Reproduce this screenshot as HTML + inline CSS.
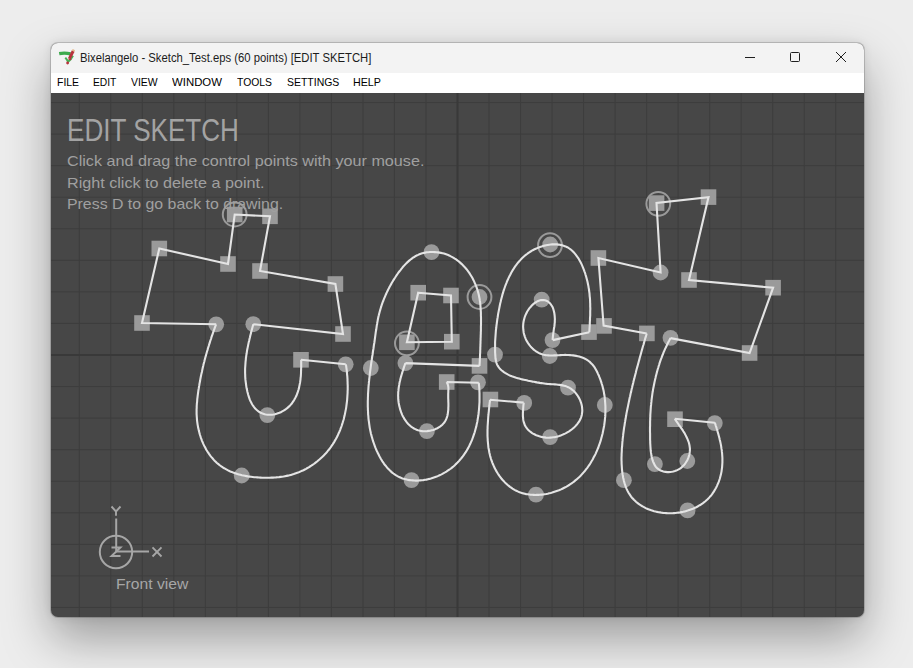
<!DOCTYPE html>
<html><head><meta charset="utf-8">
<style>
html,body{margin:0;padding:0;}
body{width:913px;height:668px;background:#ededed;position:relative;overflow:hidden;font-family:"Liberation Sans",sans-serif;}
.win{position:absolute;left:51px;top:43px;width:813px;height:574px;border-radius:7px;background:#474747;box-shadow:0 22px 48px rgba(0,0,0,0.34),0 0 10px rgba(0,0,0,0.10),0 0 0 1px rgba(0,0,0,0.16);overflow:hidden;}
.title{position:absolute;left:0;top:0;width:813px;height:30px;background:#f3f3f3;}
.menu{position:absolute;left:0;top:30px;width:813px;height:20px;background:#ffffff;}
.t{position:absolute;white-space:pre;transform-origin:0 0;line-height:1;}
svg{position:absolute;left:0;top:0;}
</style></head><body>
<div class="win">
 <div class="title"></div>
 <div class="menu"></div>
</div>
<svg width="913" height="668" viewBox="0 0 913 668">
 <defs><clipPath id="cv"><rect x="51" y="93" width="813" height="524" rx="0"/></clipPath></defs>
 <g clip-path="url(#cv)">
  <g stroke="#3d3d3d" stroke-width="1"><line x1="79.26" y1="93" x2="79.26" y2="617"/><line x1="110.78" y1="93" x2="110.78" y2="617"/><line x1="142.30" y1="93" x2="142.30" y2="617"/><line x1="173.82" y1="93" x2="173.82" y2="617"/><line x1="205.34" y1="93" x2="205.34" y2="617"/><line x1="236.86" y1="93" x2="236.86" y2="617"/><line x1="268.38" y1="93" x2="268.38" y2="617"/><line x1="299.90" y1="93" x2="299.90" y2="617"/><line x1="331.42" y1="93" x2="331.42" y2="617"/><line x1="362.94" y1="93" x2="362.94" y2="617"/><line x1="394.46" y1="93" x2="394.46" y2="617"/><line x1="425.98" y1="93" x2="425.98" y2="617"/><line x1="489.02" y1="93" x2="489.02" y2="617"/><line x1="520.54" y1="93" x2="520.54" y2="617"/><line x1="552.06" y1="93" x2="552.06" y2="617"/><line x1="583.58" y1="93" x2="583.58" y2="617"/><line x1="615.10" y1="93" x2="615.10" y2="617"/><line x1="646.62" y1="93" x2="646.62" y2="617"/><line x1="678.14" y1="93" x2="678.14" y2="617"/><line x1="709.66" y1="93" x2="709.66" y2="617"/><line x1="741.18" y1="93" x2="741.18" y2="617"/><line x1="772.70" y1="93" x2="772.70" y2="617"/><line x1="804.22" y1="93" x2="804.22" y2="617"/><line x1="835.74" y1="93" x2="835.74" y2="617"/><line x1="51" y1="102.52" x2="864" y2="102.52"/><line x1="51" y1="134.08" x2="864" y2="134.08"/><line x1="51" y1="165.64" x2="864" y2="165.64"/><line x1="51" y1="197.20" x2="864" y2="197.20"/><line x1="51" y1="228.76" x2="864" y2="228.76"/><line x1="51" y1="260.32" x2="864" y2="260.32"/><line x1="51" y1="291.88" x2="864" y2="291.88"/><line x1="51" y1="323.44" x2="864" y2="323.44"/><line x1="51" y1="386.56" x2="864" y2="386.56"/><line x1="51" y1="418.12" x2="864" y2="418.12"/><line x1="51" y1="449.68" x2="864" y2="449.68"/><line x1="51" y1="481.24" x2="864" y2="481.24"/><line x1="51" y1="512.80" x2="864" y2="512.80"/><line x1="51" y1="544.36" x2="864" y2="544.36"/><line x1="51" y1="575.92" x2="864" y2="575.92"/><line x1="51" y1="607.48" x2="864" y2="607.48"/></g>
  <g stroke="#393939" stroke-width="2"><line x1="457.5" y1="93" x2="457.5" y2="617"/><line x1="51" y1="355.0" x2="864" y2="355.0"/></g>
 </g>
 <!-- icon -->
 <g>
  <path d="M59.2 53.6 C62.5 53 66.5 52.9 70.6 53.9" stroke="#3daa4d" stroke-width="3.2" fill="none" stroke-linecap="butt"/>
  <path d="M65.3 57.6 C66.5 59 67.5 60.5 68.2 61.8 C69.8 60.5 71.5 58.5 73 55.8" stroke="#47b055" stroke-width="2" fill="none"/>
  <path d="M73.2 51 L69.4 58.6" stroke="#b8323c" stroke-width="3" fill="none"/>
  <path d="M73.9 49.6 L73.1 51.2" stroke="#e6b98a" stroke-width="2.6" fill="none"/>
  <path d="M68.4 58.8 L71.2 59.6" stroke="#b8323c" stroke-width="1.4" fill="none"/>
  <circle cx="67.6" cy="63" r="1.4" fill="#b8323c"/>
 </g>
 <!-- window controls -->
 <g stroke="#1f1f1f" stroke-width="1" fill="none">
  <line x1="745" y1="57.5" x2="755" y2="57.5"/>
  <rect x="790.5" y="52.5" width="9" height="9" rx="1"/>
  <line x1="836" y1="52" x2="846" y2="62"/><line x1="846" y1="52" x2="836" y2="62"/>
 </g>
 <!-- axis indicator -->
 <g stroke="#a6a6a6" stroke-width="2" fill="none">
  <circle cx="116" cy="552" r="16.2"/>
  <line x1="116.2" y1="518.5" x2="116.2" y2="552"/>
  <line x1="116" y1="551.6" x2="149" y2="551.6"/>
 </g>
 <g stroke="#a6a6a6" stroke-width="1.9" fill="none">
  <path d="M111.5 506.5 L116 511.5 L120.5 506.5 M116 511.5 V515.8"/>
  <path d="M152.5 547.3 L161.5 556.5 M161.5 547.3 L152.5 556.5"/>
  <path d="M111.5 547.5 H120.5 L111.5 556 H120.5"/>
 </g>
 <!-- sketch -->
 <g clip-path="url(#cv)">
  <g fill="#9a9a9a"><rect x="134.2" y="315.2" width="15.6" height="15.6"/><rect x="151.5" y="240.7" width="15.6" height="15.6"/><rect x="220.2" y="256.2" width="15.6" height="15.6"/><rect x="226.9" y="206.7" width="15.6" height="15.6"/><rect x="262.2" y="208.5" width="15.6" height="15.6"/><rect x="252.2" y="263.2" width="15.6" height="15.6"/><rect x="327.6" y="276.2" width="15.6" height="15.6"/><rect x="335.2" y="326.2" width="15.6" height="15.6"/><rect x="293.2" y="352.0" width="15.6" height="15.6"/><rect x="410.4" y="284.9" width="15.6" height="15.6"/><rect x="443.2" y="287.7" width="15.6" height="15.6"/><rect x="444.0" y="333.9" width="15.6" height="15.6"/><rect x="399.1" y="334.5" width="15.6" height="15.6"/><rect x="471.7" y="358.1" width="15.6" height="15.6"/><rect x="438.9" y="374.2" width="15.6" height="15.6"/><rect x="482.6" y="391.7" width="15.6" height="15.6"/><rect x="581.2" y="324.3" width="15.6" height="15.6"/><rect x="741.8" y="345.2" width="15.6" height="15.6"/><rect x="765.3" y="279.9" width="15.6" height="15.6"/><rect x="681.2" y="272.2" width="15.6" height="15.6"/><rect x="700.7" y="189.3" width="15.6" height="15.6"/><rect x="648.8" y="195.3" width="15.6" height="15.6"/><rect x="590.6" y="250.2" width="15.6" height="15.6"/><rect x="596.2" y="318.1" width="15.6" height="15.6"/><rect x="639.1" y="325.6" width="15.6" height="15.6"/><rect x="667.2" y="411.4" width="15.6" height="15.6"/><circle cx="216.2" cy="324.3" r="7.9"/><circle cx="253.3" cy="324.2" r="7.9"/><circle cx="267.3" cy="415.1" r="7.9"/><circle cx="345.7" cy="364.3" r="7.9"/><circle cx="241.7" cy="475.5" r="7.9"/><circle cx="431.5" cy="252.1" r="7.9"/><circle cx="479.5" cy="297.0" r="7.9"/><circle cx="405.4" cy="363.1" r="7.9"/><circle cx="426.9" cy="431.1" r="7.9"/><circle cx="478.0" cy="382.3" r="7.9"/><circle cx="411.5" cy="480.1" r="7.9"/><circle cx="370.8" cy="368.0" r="7.9"/><circle cx="524.2" cy="402.9" r="7.9"/><circle cx="550.1" cy="437.1" r="7.9"/><circle cx="568.0" cy="387.6" r="7.9"/><circle cx="495.0" cy="354.6" r="7.9"/><circle cx="550.2" cy="244.5" r="7.9"/><circle cx="552.5" cy="340.1" r="7.9"/><circle cx="541.7" cy="299.6" r="7.9"/><circle cx="549.8" cy="356.0" r="7.9"/><circle cx="604.8" cy="405.0" r="7.9"/><circle cx="536.0" cy="494.6" r="7.9"/><circle cx="670.5" cy="337.8" r="7.9"/><circle cx="660.6" cy="272.5" r="7.9"/><circle cx="654.9" cy="464.1" r="7.9"/><circle cx="687.3" cy="461.0" r="7.9"/><circle cx="714.8" cy="423.1" r="7.9"/><circle cx="687.6" cy="510.4" r="7.9"/><circle cx="623.9" cy="480.2" r="7.9"/></g>
  <g fill="none" stroke="#9a9a9a" stroke-width="2"><circle cx="234.7" cy="214.5" r="11.9"/><circle cx="479.5" cy="297.0" r="11.9"/><circle cx="406.9" cy="343.3" r="11.9"/><circle cx="550.0" cy="245.2" r="11.9"/><circle cx="658.3" cy="203.8" r="11.9"/></g>
  <path d="M216.2 324.3 L142.0 323.0 L159.3 248.5 L228.0 264.0 L234.7 214.5 L270.0 216.3 L260.0 271.0 L335.4 284.0 L343.0 334.0 L253.3 324.2 M301.0 359.8 L345.7 364.3 M253.3 324.3 L252.9 325.8 L252.5 327.2 L252.1 328.7 L251.7 330.2 L251.3 331.6 L251.0 333.1 L250.6 334.6 L250.2 336.0 L249.9 337.5 L249.5 339.0 L249.2 340.5 L248.8 341.9 L248.5 343.4 L248.2 344.9 L247.9 346.4 L247.6 347.9 L247.3 349.3 L247.0 350.8 L246.8 352.3 L246.6 353.8 L246.3 355.3 L246.1 356.8 L245.9 358.3 L245.8 359.8 L245.6 361.3 L245.5 362.8 L245.4 364.3 L245.3 365.8 L245.2 367.3 L245.1 368.8 L245.1 370.3 L245.1 371.8 L245.1 373.3 L245.2 374.9 L245.2 376.4 L245.3 377.9 L245.4 379.4 L245.6 381.0 L245.8 382.5 L246.0 384.0 L246.2 385.6 L246.4 387.1 L246.7 388.6 L247.1 390.2 L247.4 391.7 L247.8 393.3 L248.2 394.8 L248.7 396.3 L249.2 397.8 L249.7 399.3 L250.3 400.7 L251.0 402.1 L251.7 403.5 L252.4 404.8 L253.2 406.0 L254.1 407.2 L255.0 408.3 L256.0 409.3 L257.1 410.3 L258.2 411.2 L259.4 412.0 L260.6 412.7 L262.0 413.3 L263.3 413.8 L264.7 414.2 L266.1 414.5 L267.6 414.7 L269.0 414.8 L270.5 414.8 L272.0 414.7 L273.5 414.5 L275.0 414.2 L276.5 413.8 L277.9 413.3 L279.4 412.8 L280.8 412.2 L282.2 411.4 L283.6 410.7 L284.9 409.8 L286.2 408.9 L287.5 407.9 L288.6 406.9 L289.8 405.8 L290.8 404.6 L291.8 403.5 L292.7 402.2 L293.6 401.0 L294.4 399.6 L295.1 398.3 L295.8 396.9 L296.5 395.6 L297.0 394.1 L297.6 392.7 L298.0 391.3 L298.5 389.8 L298.9 388.4 L299.2 386.9 L299.5 385.4 L299.8 383.9 L300.1 382.4 L300.3 380.9 L300.5 379.3 L300.6 377.8 L300.8 376.3 L300.9 374.8 L301.0 373.2 L301.0 371.7 L301.1 370.2 L301.1 368.7 L301.2 367.2 L301.2 365.6 L301.2 364.1 L301.2 362.7 L301.2 361.2 L301.2 359.7 M345.9 364.3 L346.1 365.7 L346.3 367.2 L346.5 368.7 L346.7 370.1 L346.9 371.6 L347.0 373.1 L347.1 374.6 L347.3 376.1 L347.4 377.6 L347.5 379.1 L347.5 380.6 L347.6 382.1 L347.6 383.6 L347.7 385.1 L347.7 386.7 L347.7 388.2 L347.7 389.7 L347.6 391.3 L347.6 392.8 L347.5 394.3 L347.4 395.9 L347.3 397.4 L347.2 398.9 L347.1 400.5 L346.9 402.0 L346.7 403.5 L346.5 405.0 L346.3 406.6 L346.1 408.1 L345.8 409.6 L345.5 411.1 L345.2 412.6 L344.9 414.1 L344.6 415.6 L344.2 417.1 L343.9 418.5 L343.5 420.0 L343.0 421.5 L342.6 422.9 L342.1 424.4 L341.7 425.8 L341.2 427.2 L340.6 428.7 L340.1 430.1 L339.5 431.5 L338.9 432.8 L338.3 434.2 L337.7 435.6 L337.0 436.9 L336.3 438.2 L335.6 439.6 L334.8 440.9 L334.1 442.1 L333.3 443.4 L332.5 444.7 L331.6 445.9 L330.8 447.1 L329.9 448.3 L329.0 449.5 L328.0 450.7 L327.1 451.8 L326.1 453.0 L325.1 454.1 L324.0 455.2 L323.0 456.2 L321.9 457.3 L320.8 458.3 L319.7 459.3 L318.5 460.3 L317.4 461.3 L316.2 462.2 L315.0 463.1 L313.8 464.0 L312.5 464.9 L311.3 465.7 L310.0 466.5 L308.7 467.3 L307.4 468.0 L306.1 468.8 L304.8 469.5 L303.5 470.2 L302.1 470.8 L300.7 471.4 L299.4 472.0 L298.0 472.6 L296.6 473.1 L295.2 473.6 L293.7 474.1 L292.3 474.5 L290.9 474.9 L289.4 475.3 L288.0 475.6 L286.5 475.9 L285.0 476.2 L283.5 476.5 L282.0 476.7 L280.6 476.9 L279.1 477.1 L277.5 477.2 L276.0 477.4 L274.5 477.5 L273.0 477.6 L271.4 477.6 L269.9 477.7 L268.3 477.7 L266.8 477.7 L265.2 477.7 L263.6 477.7 L262.1 477.7 L260.5 477.6 L258.9 477.5 L257.3 477.4 L255.8 477.3 L254.2 477.2 L252.6 477.0 L251.1 476.8 L249.5 476.6 L248.0 476.4 L246.4 476.1 L244.9 475.8 L243.4 475.5 L241.9 475.2 L240.4 474.8 L238.9 474.4 L237.4 474.0 L235.9 473.5 L234.5 473.0 L233.1 472.5 L231.7 471.9 L230.3 471.4 L228.9 470.8 L227.6 470.1 L226.3 469.4 L225.0 468.7 L223.7 468.0 L222.5 467.2 L221.3 466.4 L220.1 465.5 L219.0 464.6 L217.8 463.7 L216.7 462.7 L215.7 461.7 L214.6 460.7 L213.6 459.6 L212.7 458.5 L211.7 457.4 L210.8 456.3 L209.9 455.1 L209.0 453.9 L208.2 452.7 L207.4 451.5 L206.6 450.2 L205.9 448.9 L205.2 447.6 L204.5 446.3 L203.8 444.9 L203.2 443.6 L202.6 442.2 L202.0 440.8 L201.5 439.4 L200.9 437.9 L200.5 436.5 L200.0 435.0 L199.6 433.6 L199.2 432.1 L198.8 430.6 L198.5 429.1 L198.1 427.6 L197.9 426.1 L197.6 424.6 L197.4 423.1 L197.2 421.6 L197.0 420.1 L196.9 418.5 L196.8 417.0 L196.7 415.5 L196.6 414.0 L196.6 412.4 L196.6 410.9 L196.6 409.4 L196.7 407.9 L196.7 406.4 L196.8 404.8 L196.9 403.3 L197.1 401.8 L197.2 400.3 L197.3 398.8 L197.5 397.3 L197.7 395.7 L197.9 394.2 L198.1 392.7 L198.3 391.2 L198.5 389.7 L198.8 388.2 L199.0 386.7 L199.3 385.2 L199.5 383.7 L199.8 382.3 L200.1 380.8 L200.3 379.3 L200.6 377.8 L200.9 376.3 L201.2 374.9 L201.5 373.4 L201.9 371.9 L202.2 370.4 L202.5 369.0 L202.8 367.5 L203.2 366.0 L203.5 364.6 L203.9 363.1 L204.3 361.7 L204.6 360.2 L205.0 358.8 L205.4 357.3 L205.8 355.9 L206.2 354.4 L206.6 353.0 L207.0 351.5 L207.5 350.1 L207.9 348.6 L208.3 347.2 L208.8 345.8 L209.2 344.3 L209.7 342.9 L210.1 341.4 L210.6 340.0 L211.1 338.6 L211.5 337.1 L212.0 335.7 L212.5 334.3 L213.0 332.9 L213.5 331.4 L214.0 330.0 L214.5 328.6 L215.0 327.1 L215.6 325.7 L216.1 324.3 M418.2 292.7 L451.0 295.5 L451.8 341.7 L406.9 342.3 Z M479.5 365.9 L405.4 363.1 M446.7 382.0 L478.8 382.7 M431.5 252.0 L433.1 252.0 L434.8 252.1 L436.4 252.2 L437.9 252.4 L439.5 252.6 L441.0 252.9 L442.5 253.2 L444.0 253.6 L445.4 254.1 L446.8 254.6 L448.2 255.1 L449.6 255.7 L450.9 256.4 L452.3 257.1 L453.6 257.8 L454.8 258.6 L456.1 259.4 L457.3 260.3 L458.4 261.2 L459.6 262.1 L460.7 263.1 L461.8 264.1 L462.9 265.2 L463.9 266.3 L465.0 267.4 L465.9 268.5 L466.9 269.7 L467.8 270.9 L468.7 272.1 L469.6 273.4 L470.4 274.7 L471.2 276.0 L472.0 277.3 L472.7 278.6 L473.4 280.0 L474.1 281.4 L474.7 282.8 L475.3 284.2 L475.9 285.6 L476.5 287.1 L477.0 288.6 L477.5 290.0 L477.9 291.5 L478.3 293.0 L478.7 294.5 L479.0 296.0 L479.3 297.5 L479.6 299.0 L479.8 300.5 L480.1 302.0 L480.2 303.5 L480.4 305.0 L480.5 306.5 L480.6 308.1 L480.7 309.6 L480.8 311.1 L480.9 312.6 L480.9 314.1 L480.9 315.7 L481.0 317.2 L481.0 318.7 L481.0 320.2 L481.0 321.8 L481.0 323.3 L481.0 324.8 L480.9 326.3 L480.9 327.8 L480.9 329.4 L480.9 330.9 L480.8 332.4 L480.8 333.9 L480.7 335.5 L480.7 337.0 L480.6 338.5 L480.6 340.0 L480.5 341.5 L480.5 343.1 L480.4 344.6 L480.4 346.1 L480.3 347.6 L480.3 349.2 L480.2 350.7 L480.2 352.2 L480.1 353.7 L480.0 355.2 L480.0 356.8 L479.9 358.3 L479.8 359.8 L479.8 361.3 L479.7 362.9 L479.6 364.4 L479.5 365.9 M431.5 252.0 L429.9 252.0 L428.2 252.2 L426.7 252.3 L425.2 252.6 L423.7 252.9 L422.2 253.3 L420.8 253.8 L419.4 254.3 L418.1 254.9 L416.7 255.5 L415.5 256.2 L414.2 257.0 L413.0 257.7 L411.8 258.6 L410.6 259.5 L409.5 260.4 L408.4 261.4 L407.3 262.4 L406.2 263.4 L405.2 264.5 L404.1 265.6 L403.1 266.7 L402.2 267.9 L401.2 269.1 L400.3 270.3 L399.3 271.5 L398.4 272.7 L397.5 274.0 L396.7 275.2 L395.8 276.5 L395.0 277.8 L394.1 279.1 L393.3 280.4 L392.5 281.7 L391.7 283.0 L391.0 284.4 L390.2 285.7 L389.5 287.1 L388.8 288.4 L388.1 289.8 L387.4 291.2 L386.7 292.6 L386.1 294.0 L385.5 295.4 L384.9 296.8 L384.3 298.2 L383.7 299.6 L383.2 301.0 L382.6 302.4 L382.1 303.9 L381.6 305.3 L381.2 306.7 L380.7 308.2 L380.3 309.6 L379.9 311.0 L379.5 312.5 L379.1 313.9 L378.8 315.3 L378.4 316.8 L378.1 318.2 L377.8 319.7 L377.6 321.1 L377.3 322.5 L377.1 324.0 L376.8 325.4 L376.6 326.9 L376.4 328.3 L376.2 329.8 L375.9 331.2 L375.7 332.7 L375.5 334.2 L375.3 335.6 L375.1 337.1 L374.9 338.6 L374.7 340.1 L374.5 341.5 L374.3 343.0 L374.0 344.5 L373.8 346.0 L373.6 347.5 L373.4 349.0 L373.1 350.5 L372.9 352.0 L372.7 353.5 L372.5 355.0 L372.2 356.5 L372.0 358.0 L371.8 359.5 L371.6 361.0 L371.3 362.6 L371.1 364.1 L370.9 365.6 L370.7 367.1 L370.5 368.7 L370.3 370.2 L370.1 371.7 L369.9 373.2 L369.7 374.8 L369.6 376.3 L369.4 377.8 L369.2 379.3 L369.1 380.9 L368.9 382.4 L368.8 383.9 L368.6 385.5 L368.5 387.0 L368.4 388.5 L368.3 390.0 L368.2 391.6 L368.1 393.1 L368.0 394.6 L368.0 396.1 L367.9 397.7 L367.9 399.2 L367.8 400.7 L367.8 402.2 L367.8 403.7 L367.8 405.3 L367.8 406.8 L367.9 408.3 L367.9 409.8 L368.0 411.3 L368.1 412.8 L368.1 414.3 L368.3 415.8 L368.4 417.3 L368.5 418.8 L368.7 420.3 L368.9 421.7 L369.1 423.2 L369.3 424.7 L369.5 426.2 L369.7 427.6 L370.0 429.1 L370.3 430.6 L370.6 432.0 L370.9 433.5 L371.3 434.9 L371.7 436.4 L372.1 437.8 L372.5 439.2 L372.9 440.7 L373.4 442.1 L373.9 443.5 L374.4 444.9 L374.9 446.3 L375.4 447.7 L376.0 449.1 L376.6 450.5 L377.3 451.9 L377.9 453.3 L378.6 454.6 L379.3 456.0 L380.0 457.3 L380.8 458.7 L381.6 460.0 L382.4 461.3 L383.3 462.5 L384.1 463.8 L385.0 465.0 L386.0 466.2 L386.9 467.3 L387.9 468.5 L389.0 469.5 L390.0 470.6 L391.1 471.6 L392.2 472.6 L393.4 473.5 L394.6 474.3 L395.8 475.1 L397.1 475.9 L398.3 476.6 L399.7 477.2 L401.0 477.8 L402.4 478.4 L403.8 478.8 L405.3 479.2 L406.8 479.6 L408.2 479.9 L409.7 480.1 L411.2 480.3 L412.8 480.4 L414.3 480.5 L415.8 480.6 L417.3 480.6 L418.8 480.5 L420.4 480.4 L421.9 480.3 L423.4 480.1 L424.9 479.8 L426.4 479.6 L427.9 479.2 L429.4 478.9 L430.9 478.5 L432.4 478.0 L433.9 477.5 L435.3 477.0 L436.8 476.5 L438.2 475.9 L439.6 475.2 L441.0 474.6 L442.4 473.9 L443.7 473.1 L445.0 472.4 L446.4 471.6 L447.7 470.7 L448.9 469.9 L450.2 469.0 L451.4 468.1 L452.6 467.1 L453.7 466.2 L454.8 465.2 L455.9 464.1 L457.0 463.1 L458.0 462.0 L459.1 460.9 L460.0 459.8 L461.0 458.7 L461.9 457.5 L462.8 456.4 L463.7 455.2 L464.5 453.9 L465.4 452.7 L466.2 451.4 L466.9 450.2 L467.7 448.9 L468.4 447.6 L469.1 446.2 L469.7 444.9 L470.4 443.6 L471.0 442.2 L471.6 440.8 L472.2 439.4 L472.7 438.0 L473.2 436.6 L473.7 435.1 L474.2 433.7 L474.7 432.3 L475.1 430.8 L475.5 429.3 L475.9 427.8 L476.3 426.4 L476.6 424.9 L476.9 423.4 L477.3 421.9 L477.5 420.4 L477.8 418.8 L478.0 417.3 L478.3 415.8 L478.5 414.3 L478.7 412.7 L478.8 411.2 L479.0 409.7 L479.1 408.2 L479.2 406.6 L479.3 405.1 L479.4 403.6 L479.5 402.1 L479.5 400.5 L479.5 399.0 L479.5 397.5 L479.5 396.0 L479.5 394.5 L479.5 393.0 L479.4 391.5 L479.4 390.0 L479.3 388.5 L479.2 387.1 L479.1 385.6 L478.9 384.1 L478.8 382.7 M405.4 363.1 L404.9 364.5 L404.4 366.0 L403.9 367.4 L403.5 368.9 L403.0 370.3 L402.5 371.7 L402.1 373.2 L401.6 374.7 L401.2 376.1 L400.8 377.6 L400.4 379.0 L400.1 380.5 L399.7 382.0 L399.4 383.5 L399.2 384.9 L398.9 386.4 L398.7 387.9 L398.5 389.4 L398.4 390.9 L398.2 392.4 L398.2 393.9 L398.1 395.4 L398.2 396.9 L398.2 398.5 L398.3 400.0 L398.5 401.5 L398.7 403.0 L399.0 404.6 L399.3 406.1 L399.7 407.6 L400.1 409.2 L400.6 410.7 L401.1 412.2 L401.7 413.6 L402.3 415.1 L403.0 416.5 L403.8 417.8 L404.5 419.2 L405.4 420.4 L406.3 421.7 L407.2 422.8 L408.2 424.0 L409.3 425.0 L410.4 426.0 L411.5 426.9 L412.7 427.7 L414.0 428.5 L415.3 429.1 L416.6 429.7 L418.0 430.2 L419.5 430.6 L420.9 430.9 L422.4 431.1 L424.0 431.2 L425.5 431.2 L427.1 431.1 L428.6 430.9 L430.1 430.7 L431.7 430.3 L433.2 429.9 L434.6 429.4 L436.0 428.8 L437.4 428.2 L438.7 427.4 L440.0 426.6 L441.2 425.7 L442.3 424.7 L443.3 423.6 L444.3 422.5 L445.1 421.3 L445.8 420.0 L446.4 418.7 L446.9 417.3 L447.4 415.8 L447.7 414.3 L447.9 412.8 L448.1 411.2 L448.3 409.6 L448.3 408.0 L448.4 406.4 L448.4 404.7 L448.4 403.1 L448.3 401.5 L448.3 399.8 L448.2 398.3 L448.2 396.7 L448.2 395.2 L448.2 393.7 L448.3 392.3 L448.3 390.9 L448.4 389.5 L448.4 388.2 L448.3 386.8 L448.0 385.3 L447.5 383.7 L446.7 382.0 M490.0 399.8 L523.7 402.6 M589.3 332.2 L552.7 340.1 M523.7 402.6 L523.6 403.9 L523.4 405.3 L523.3 406.8 L523.2 408.3 L523.1 409.9 L523.0 411.5 L522.9 413.0 L522.9 414.6 L522.9 416.2 L523.1 417.8 L523.2 419.4 L523.5 420.9 L523.9 422.4 L524.4 423.8 L524.9 425.2 L525.6 426.5 L526.4 427.7 L527.3 428.9 L528.3 430.0 L529.4 431.0 L530.6 431.9 L531.8 432.8 L533.0 433.6 L534.4 434.3 L535.7 435.0 L537.1 435.6 L538.6 436.1 L540.0 436.5 L541.5 436.9 L543.0 437.2 L544.4 437.4 L545.9 437.6 L547.4 437.7 L548.9 437.7 L550.4 437.6 L551.8 437.5 L553.3 437.3 L554.8 437.1 L556.3 436.8 L557.7 436.4 L559.2 436.0 L560.7 435.5 L562.1 434.9 L563.5 434.3 L565.0 433.6 L566.4 432.9 L567.7 432.1 L569.1 431.3 L570.4 430.4 L571.7 429.5 L572.9 428.5 L574.1 427.5 L575.2 426.4 L576.2 425.3 L577.2 424.1 L578.1 422.9 L579.0 421.7 L579.7 420.4 L580.4 419.1 L580.9 417.8 L581.4 416.4 L581.8 415.0 L582.0 413.5 L582.2 412.1 L582.3 410.6 L582.2 409.1 L582.1 407.6 L581.9 406.1 L581.6 404.7 L581.2 403.2 L580.7 401.8 L580.2 400.3 L579.5 398.9 L578.8 397.6 L578.0 396.3 L577.2 395.0 L576.3 393.8 L575.3 392.6 L574.3 391.5 L573.2 390.5 L572.0 389.6 L570.8 388.7 L569.5 387.9 L568.2 387.2 L566.9 386.6 L565.5 386.1 L564.0 385.7 L562.6 385.4 L561.1 385.1 L559.5 384.9 L558.0 384.7 L556.4 384.5 L554.9 384.4 L553.3 384.3 L551.8 384.2 L550.2 384.1 L548.7 384.0 L547.2 383.9 L545.7 383.7 L544.2 383.5 L542.7 383.3 L541.3 383.1 L539.8 382.9 L538.4 382.6 L536.9 382.4 L535.5 382.1 L534.0 381.8 L532.6 381.6 L531.1 381.3 L529.6 381.0 L528.2 380.7 L526.7 380.3 L525.2 380.0 L523.7 379.7 L522.2 379.4 L520.7 379.0 L519.2 378.6 L517.7 378.2 L516.2 377.8 L514.7 377.3 L513.3 376.8 L511.9 376.3 L510.4 375.7 L509.1 375.1 L507.7 374.4 L506.4 373.7 L505.1 372.9 L503.9 372.1 L502.7 371.2 L501.5 370.2 L500.4 369.2 L499.4 368.1 L498.5 366.9 L497.7 365.7 L497.0 364.4 L496.5 363.0 L496.1 361.5 L495.8 360.0 L495.5 358.5 L495.4 357.0 L495.3 355.4 L495.2 353.8 L495.1 352.3 L495.1 350.8 L495.1 349.3 L495.1 347.8 L495.1 346.3 L495.1 344.8 L495.1 343.3 L495.1 341.9 L495.2 340.4 L495.3 339.0 L495.4 337.5 L495.5 336.1 L495.6 334.7 L495.7 333.2 L495.8 331.8 L495.9 330.4 L496.1 328.9 L496.3 327.5 L496.4 326.0 L496.6 324.6 L496.8 323.1 L497.0 321.6 L497.2 320.1 L497.4 318.7 L497.7 317.2 L497.9 315.7 L498.1 314.1 L498.4 312.6 L498.7 311.1 L499.0 309.6 L499.3 308.1 L499.6 306.5 L499.9 305.0 L500.2 303.5 L500.6 302.0 L500.9 300.5 L501.3 298.9 L501.7 297.4 L502.1 295.9 L502.5 294.4 L503.0 292.9 L503.4 291.4 L503.9 289.9 L504.4 288.5 L504.9 287.0 L505.4 285.5 L506.0 284.1 L506.6 282.7 L507.1 281.2 L507.8 279.8 L508.4 278.4 L509.0 277.1 L509.7 275.7 L510.4 274.4 L511.1 273.0 L511.8 271.7 L512.6 270.4 L513.4 269.2 L514.2 267.9 L515.0 266.7 L515.9 265.5 L516.7 264.3 L517.6 263.2 L518.6 262.0 L519.5 260.9 L520.5 259.9 L521.5 258.8 L522.5 257.8 L523.6 256.8 L524.7 255.8 L525.8 254.9 L527.0 254.0 L528.1 253.1 L529.3 252.3 L530.6 251.5 L531.9 250.7 L533.2 250.0 L534.5 249.3 L535.8 248.7 L537.2 248.1 L538.7 247.5 L540.1 246.9 L541.6 246.5 L543.1 246.0 L544.6 245.6 L546.2 245.3 L547.7 245.0 L549.2 244.7 L550.8 244.5 L552.3 244.4 L553.9 244.4 L555.4 244.4 L556.9 244.4 L558.4 244.6 L559.9 244.8 L561.3 245.1 L562.8 245.5 L564.2 245.9 L565.5 246.4 L566.8 247.0 L568.1 247.7 L569.3 248.5 L570.5 249.3 L571.6 250.2 L572.7 251.2 L573.7 252.3 L574.7 253.4 L575.7 254.6 L576.6 255.8 L577.5 257.0 L578.4 258.3 L579.2 259.7 L579.9 261.1 L580.7 262.5 L581.4 263.9 L582.1 265.4 L582.7 266.8 L583.3 268.3 L583.9 269.8 L584.4 271.3 L585.0 272.8 L585.4 274.3 L585.9 275.8 L586.3 277.3 L586.7 278.8 L587.1 280.2 L587.5 281.7 L587.8 283.2 L588.1 284.7 L588.4 286.1 L588.6 287.6 L588.9 289.0 L589.1 290.5 L589.3 292.0 L589.5 293.4 L589.6 294.9 L589.7 296.3 L589.9 297.8 L590.0 299.2 L590.1 300.7 L590.1 302.2 L590.2 303.6 L590.2 305.1 L590.2 306.5 L590.3 308.0 L590.3 309.5 L590.2 311.0 L590.2 312.4 L590.2 313.9 L590.2 315.4 L590.1 316.9 L590.0 318.4 L590.0 319.9 L589.9 321.4 L589.8 322.9 L589.8 324.5 L589.7 326.0 L589.6 327.5 L589.5 329.1 L589.4 330.6 L589.3 332.2 M552.7 340.1 L552.7 338.5 L552.9 337.0 L553.0 335.5 L553.2 334.0 L553.4 332.6 L553.6 331.1 L553.8 329.7 L554.0 328.2 L554.3 326.7 L554.5 325.3 L554.6 323.8 L554.8 322.3 L554.8 320.8 L554.9 319.3 L554.8 317.7 L554.7 316.1 L554.5 314.5 L554.3 312.9 L553.9 311.3 L553.5 309.7 L553.0 308.2 L552.4 306.8 L551.6 305.5 L550.8 304.3 L549.9 303.2 L548.8 302.2 L547.7 301.4 L546.4 300.8 L545.1 300.3 L543.7 300.1 L542.3 300.0 L540.9 300.1 L539.5 300.5 L538.1 301.0 L536.8 301.7 L535.5 302.5 L534.2 303.4 L533.0 304.4 L531.8 305.5 L530.8 306.7 L529.7 307.9 L528.8 309.2 L527.9 310.5 L527.1 311.8 L526.4 313.2 L525.7 314.6 L525.1 316.0 L524.6 317.5 L524.2 319.0 L523.8 320.5 L523.5 322.0 L523.3 323.5 L523.2 325.0 L523.1 326.6 L523.2 328.1 L523.3 329.7 L523.5 331.2 L523.7 332.7 L524.1 334.2 L524.5 335.7 L525.0 337.1 L525.6 338.6 L526.2 340.0 L527.0 341.4 L527.8 342.7 L528.6 344.0 L529.5 345.2 L530.5 346.4 L531.5 347.5 L532.6 348.6 L533.7 349.6 L534.9 350.5 L536.1 351.4 L537.4 352.2 L538.6 352.9 L540.0 353.5 L541.3 354.1 L542.7 354.5 L544.0 354.8 L545.5 355.1 L546.9 355.3 L548.3 355.4 L549.8 355.5 L551.3 355.5 L552.8 355.5 L554.3 355.4 L555.8 355.4 L557.3 355.3 L558.9 355.2 L560.5 355.1 L562.0 355.0 L563.6 355.0 L565.2 354.9 L566.8 355.0 L568.4 355.0 L570.0 355.1 L571.5 355.2 L573.1 355.4 L574.7 355.6 L576.2 355.9 L577.7 356.2 L579.2 356.6 L580.7 357.1 L582.1 357.6 L583.5 358.1 L584.9 358.7 L586.2 359.4 L587.4 360.2 L588.6 361.0 L589.8 361.9 L590.8 362.9 L591.8 363.9 L592.8 365.0 L593.7 366.2 L594.6 367.4 L595.4 368.7 L596.1 370.0 L596.8 371.3 L597.5 372.7 L598.1 374.1 L598.8 375.5 L599.3 376.9 L599.9 378.3 L600.4 379.7 L600.9 381.1 L601.4 382.6 L601.8 384.0 L602.3 385.5 L602.7 386.9 L603.0 388.4 L603.4 389.8 L603.7 391.3 L604.0 392.8 L604.2 394.3 L604.5 395.8 L604.7 397.3 L604.8 398.8 L605.0 400.3 L605.1 401.8 L605.2 403.3 L605.3 404.8 L605.4 406.3 L605.4 407.8 L605.4 409.3 L605.4 410.9 L605.4 412.4 L605.3 413.9 L605.3 415.4 L605.2 416.9 L605.0 418.4 L604.9 420.0 L604.7 421.5 L604.5 423.0 L604.3 424.5 L604.1 426.0 L603.8 427.5 L603.5 429.0 L603.2 430.5 L602.9 432.0 L602.6 433.5 L602.2 435.0 L601.8 436.5 L601.4 437.9 L601.0 439.4 L600.6 440.9 L600.1 442.3 L599.6 443.8 L599.1 445.2 L598.6 446.6 L598.1 448.0 L597.5 449.4 L596.9 450.8 L596.3 452.2 L595.7 453.6 L595.0 455.0 L594.3 456.3 L593.6 457.6 L592.9 459.0 L592.2 460.3 L591.4 461.5 L590.7 462.8 L589.9 464.1 L589.0 465.3 L588.2 466.5 L587.3 467.8 L586.4 468.9 L585.5 470.1 L584.6 471.3 L583.6 472.4 L582.6 473.5 L581.6 474.6 L580.6 475.7 L579.6 476.7 L578.5 477.7 L577.4 478.7 L576.3 479.7 L575.1 480.6 L574.0 481.6 L572.8 482.5 L571.6 483.4 L570.3 484.2 L569.1 485.0 L567.8 485.8 L566.5 486.6 L565.2 487.3 L563.8 488.0 L562.4 488.7 L561.0 489.4 L559.6 490.0 L558.2 490.6 L556.7 491.1 L555.2 491.6 L553.7 492.1 L552.2 492.6 L550.7 493.0 L549.2 493.3 L547.7 493.7 L546.1 494.0 L544.6 494.2 L543.0 494.5 L541.5 494.6 L539.9 494.8 L538.4 494.9 L536.8 494.9 L535.3 495.0 L533.7 494.9 L532.2 494.8 L530.7 494.7 L529.2 494.5 L527.7 494.3 L526.2 494.1 L524.7 493.7 L523.3 493.4 L521.8 492.9 L520.4 492.5 L519.0 492.0 L517.7 491.4 L516.3 490.7 L515.0 490.1 L513.7 489.3 L512.5 488.6 L511.2 487.7 L510.0 486.9 L508.8 485.9 L507.7 485.0 L506.6 484.0 L505.5 483.0 L504.4 481.9 L503.4 480.8 L502.4 479.7 L501.4 478.5 L500.5 477.3 L499.6 476.1 L498.7 474.8 L497.8 473.5 L497.0 472.2 L496.2 470.9 L495.5 469.6 L494.8 468.2 L494.1 466.8 L493.5 465.4 L492.9 464.0 L492.3 462.6 L491.8 461.2 L491.3 459.8 L490.8 458.3 L490.4 456.9 L490.0 455.4 L489.7 454.0 L489.3 452.5 L489.1 451.0 L488.8 449.5 L488.5 448.0 L488.3 446.6 L488.2 445.1 L488.0 443.5 L487.9 442.0 L487.7 440.5 L487.7 439.0 L487.6 437.5 L487.5 436.0 L487.5 434.5 L487.5 432.9 L487.5 431.4 L487.5 429.9 L487.6 428.3 L487.6 426.8 L487.7 425.3 L487.8 423.8 L487.9 422.2 L488.0 420.7 L488.1 419.2 L488.2 417.7 L488.3 416.2 L488.5 414.7 L488.6 413.1 L488.8 411.6 L488.9 410.1 L489.1 408.6 L489.2 407.2 L489.4 405.7 L489.5 404.2 L489.7 402.7 L489.9 401.3 L490.0 399.8 M670.5 338.1 L749.6 353.0 L773.1 287.7 L689.0 280.0 L708.5 197.1 L656.5 203.0 L660.6 272.5 L598.4 258.0 L603.6 325.6 L646.7 333.5 M674.7 418.8 L714.8 422.7 M670.5 338.1 L669.8 339.4 L669.1 340.8 L668.4 342.1 L667.7 343.4 L667.0 344.8 L666.4 346.2 L665.8 347.5 L665.1 348.9 L664.5 350.3 L663.9 351.7 L663.3 353.1 L662.8 354.5 L662.2 355.9 L661.7 357.4 L661.1 358.8 L660.6 360.2 L660.1 361.7 L659.6 363.1 L659.2 364.6 L658.7 366.0 L658.3 367.5 L657.8 369.0 L657.4 370.5 L657.0 371.9 L656.6 373.4 L656.2 374.9 L655.8 376.4 L655.5 377.9 L655.1 379.4 L654.8 380.9 L654.5 382.3 L654.2 383.8 L653.9 385.3 L653.6 386.8 L653.3 388.3 L653.0 389.8 L652.8 391.3 L652.5 392.9 L652.3 394.4 L652.1 395.9 L651.9 397.4 L651.7 398.9 L651.5 400.4 L651.4 401.9 L651.2 403.4 L651.1 404.9 L650.9 406.4 L650.8 407.8 L650.7 409.3 L650.6 410.8 L650.5 412.3 L650.4 413.8 L650.3 415.3 L650.3 416.8 L650.2 418.3 L650.2 419.8 L650.1 421.3 L650.1 422.9 L650.1 424.4 L650.1 425.9 L650.0 427.4 L650.0 428.9 L650.0 430.5 L650.0 432.0 L650.1 433.5 L650.1 435.1 L650.1 436.6 L650.1 438.2 L650.1 439.7 L650.2 441.3 L650.2 442.8 L650.3 444.4 L650.4 446.0 L650.5 447.6 L650.6 449.1 L650.7 450.7 L650.9 452.2 L651.2 453.8 L651.4 455.3 L651.7 456.9 L652.1 458.4 L652.5 459.9 L653.0 461.3 L653.6 462.8 L654.2 464.1 L654.9 465.4 L655.7 466.6 L656.7 467.7 L657.7 468.6 L658.8 469.5 L660.0 470.2 L661.4 470.8 L662.7 471.3 L664.2 471.7 L665.7 471.9 L667.2 472.1 L668.7 472.1 L670.3 472.0 L671.8 471.8 L673.3 471.5 L674.9 471.1 L676.3 470.6 L677.7 469.9 L679.1 469.2 L680.4 468.3 L681.6 467.4 L682.7 466.3 L683.8 465.2 L684.8 464.1 L685.7 462.8 L686.5 461.5 L687.3 460.2 L687.9 458.8 L688.5 457.4 L689.0 455.9 L689.4 454.4 L689.6 452.9 L689.8 451.4 L689.9 449.9 L689.9 448.4 L689.7 446.9 L689.5 445.5 L689.2 444.0 L688.8 442.5 L688.3 441.1 L687.7 439.6 L687.1 438.2 L686.4 436.8 L685.7 435.4 L685.0 434.0 L684.2 432.6 L683.3 431.3 L682.5 429.9 L681.6 428.6 L680.7 427.3 L679.8 426.0 L678.9 424.8 L678.0 423.5 L677.2 422.3 L676.3 421.1 L675.5 419.9 L674.7 418.8 M714.8 422.7 L715.3 424.1 L715.7 425.5 L716.2 426.9 L716.6 428.3 L717.1 429.8 L717.5 431.2 L717.9 432.6 L718.3 434.1 L718.7 435.6 L719.1 437.0 L719.5 438.5 L719.8 440.0 L720.2 441.4 L720.5 442.9 L720.8 444.4 L721.1 445.9 L721.3 447.4 L721.5 448.9 L721.8 450.4 L721.9 451.9 L722.1 453.4 L722.2 455.0 L722.3 456.5 L722.4 458.0 L722.4 459.5 L722.4 461.0 L722.4 462.5 L722.3 464.0 L722.2 465.6 L722.1 467.1 L721.9 468.6 L721.7 470.1 L721.5 471.6 L721.2 473.1 L720.9 474.6 L720.5 476.1 L720.1 477.6 L719.7 479.0 L719.2 480.5 L718.7 481.9 L718.1 483.3 L717.5 484.7 L716.9 486.1 L716.2 487.5 L715.5 488.8 L714.7 490.1 L714.0 491.4 L713.1 492.7 L712.3 493.9 L711.4 495.1 L710.4 496.2 L709.4 497.4 L708.4 498.4 L707.3 499.5 L706.2 500.5 L705.1 501.5 L703.9 502.4 L702.7 503.3 L701.5 504.1 L700.2 505.0 L698.9 505.7 L697.6 506.5 L696.3 507.2 L694.9 507.8 L693.5 508.5 L692.1 509.1 L690.7 509.6 L689.2 510.1 L687.7 510.6 L686.3 511.0 L684.8 511.4 L683.2 511.8 L681.7 512.1 L680.2 512.4 L678.7 512.6 L677.1 512.8 L675.6 513.0 L674.0 513.1 L672.4 513.2 L670.9 513.2 L669.3 513.2 L667.8 513.2 L666.2 513.1 L664.7 513.0 L663.1 512.9 L661.6 512.7 L660.1 512.4 L658.6 512.2 L657.1 511.9 L655.6 511.5 L654.1 511.2 L652.7 510.7 L651.3 510.3 L649.8 509.8 L648.4 509.3 L647.1 508.7 L645.7 508.1 L644.4 507.4 L643.1 506.7 L641.9 506.0 L640.6 505.2 L639.4 504.4 L638.3 503.6 L637.1 502.7 L636.0 501.8 L635.0 500.8 L633.9 499.8 L633.0 498.8 L632.0 497.7 L631.1 496.6 L630.3 495.4 L629.5 494.2 L628.7 493.0 L628.0 491.7 L627.3 490.4 L626.7 489.1 L626.1 487.7 L625.6 486.3 L625.1 484.9 L624.6 483.4 L624.2 482.0 L623.8 480.5 L623.5 479.0 L623.1 477.5 L622.9 475.9 L622.6 474.4 L622.4 472.8 L622.2 471.3 L622.0 469.7 L621.9 468.1 L621.8 466.6 L621.7 465.0 L621.6 463.4 L621.6 461.9 L621.5 460.3 L621.5 458.8 L621.5 457.2 L621.6 455.7 L621.6 454.1 L621.7 452.6 L621.8 451.0 L621.8 449.5 L621.9 448.0 L622.1 446.5 L622.2 444.9 L622.3 443.4 L622.4 441.9 L622.6 440.4 L622.7 438.9 L622.9 437.4 L623.1 435.9 L623.2 434.4 L623.4 433.0 L623.6 431.5 L623.8 430.0 L624.0 428.5 L624.2 427.1 L624.5 425.6 L624.7 424.1 L624.9 422.7 L625.2 421.2 L625.4 419.7 L625.7 418.3 L625.9 416.8 L626.2 415.3 L626.4 413.9 L626.7 412.4 L627.0 410.9 L627.3 409.5 L627.6 408.0 L627.9 406.6 L628.2 405.1 L628.5 403.6 L628.8 402.1 L629.1 400.7 L629.4 399.2 L629.7 397.7 L630.1 396.3 L630.4 394.8 L630.7 393.3 L631.1 391.9 L631.4 390.4 L631.7 388.9 L632.1 387.4 L632.4 386.0 L632.8 384.5 L633.2 383.0 L633.5 381.6 L633.9 380.1 L634.3 378.6 L634.6 377.2 L635.0 375.7 L635.4 374.2 L635.8 372.7 L636.1 371.3 L636.5 369.8 L636.9 368.3 L637.3 366.9 L637.7 365.4 L638.1 364.0 L638.5 362.5 L638.9 361.0 L639.3 359.6 L639.7 358.1 L640.1 356.6 L640.5 355.2 L640.9 353.7 L641.3 352.3 L641.7 350.8 L642.1 349.4 L642.5 347.9 L642.9 346.5 L643.4 345.0 L643.8 343.6 L644.2 342.1 L644.6 340.7 L645.0 339.2 L645.4 337.8 L645.9 336.4 L646.3 334.9 L646.7 333.5" fill="none" stroke="#e4e4e4" stroke-width="2.1" stroke-linejoin="miter"/>
 </g>
</svg>
<div class="t" id="title" style="left:80px;top:52px;font-size:12px;color:#1c1c1c;transform:scaleX(0.94)">Bixelangelo - Sketch_Test.eps (60 points) [EDIT SKETCH]</div>
<div class="t" style="left:57px;top:77px;font-size:11.5px;color:#000;transform:scaleX(0.909)">FILE</div>
<div class="t" style="left:93px;top:77px;font-size:11.5px;color:#000;transform:scaleX(0.892)">EDIT</div>
<div class="t" style="left:130.5px;top:77px;font-size:11.5px;color:#000;transform:scaleX(0.907)">VIEW</div>
<div class="t" style="left:172px;top:77px;font-size:11.5px;color:#000;transform:scaleX(0.99)">WINDOW</div>
<div class="t" style="left:237px;top:77px;font-size:11.5px;color:#000;transform:scaleX(0.90)">TOOLS</div>
<div class="t" style="left:286.5px;top:77px;font-size:11.5px;color:#000;transform:scaleX(0.91)">SETTINGS</div>
<div class="t" style="left:352.5px;top:77px;font-size:11.5px;color:#000;transform:scaleX(0.93)">HELP</div>
<div class="t" style="left:67px;top:115px;font-size:30.5px;color:#a3a3a3;transform:scaleX(0.855)">EDIT SKETCH</div>
<div class="t" style="left:67px;top:153px;font-size:15px;color:#a0a0a0;transform:scaleX(1.077)">Click and drag the control points with your mouse.</div>
<div class="t" style="left:67px;top:175px;font-size:15px;color:#a0a0a0;transform:scaleX(1.077)">Right click to delete a point.</div>
<div class="t" style="left:67px;top:196px;font-size:15px;color:#a0a0a0;transform:scaleX(1.058)">Press D to go back to drawing.</div>
<div class="t" style="left:116px;top:577px;font-size:14.5px;color:#a6a6a6;transform:scaleX(1.08)">Front view</div>
</body></html>
